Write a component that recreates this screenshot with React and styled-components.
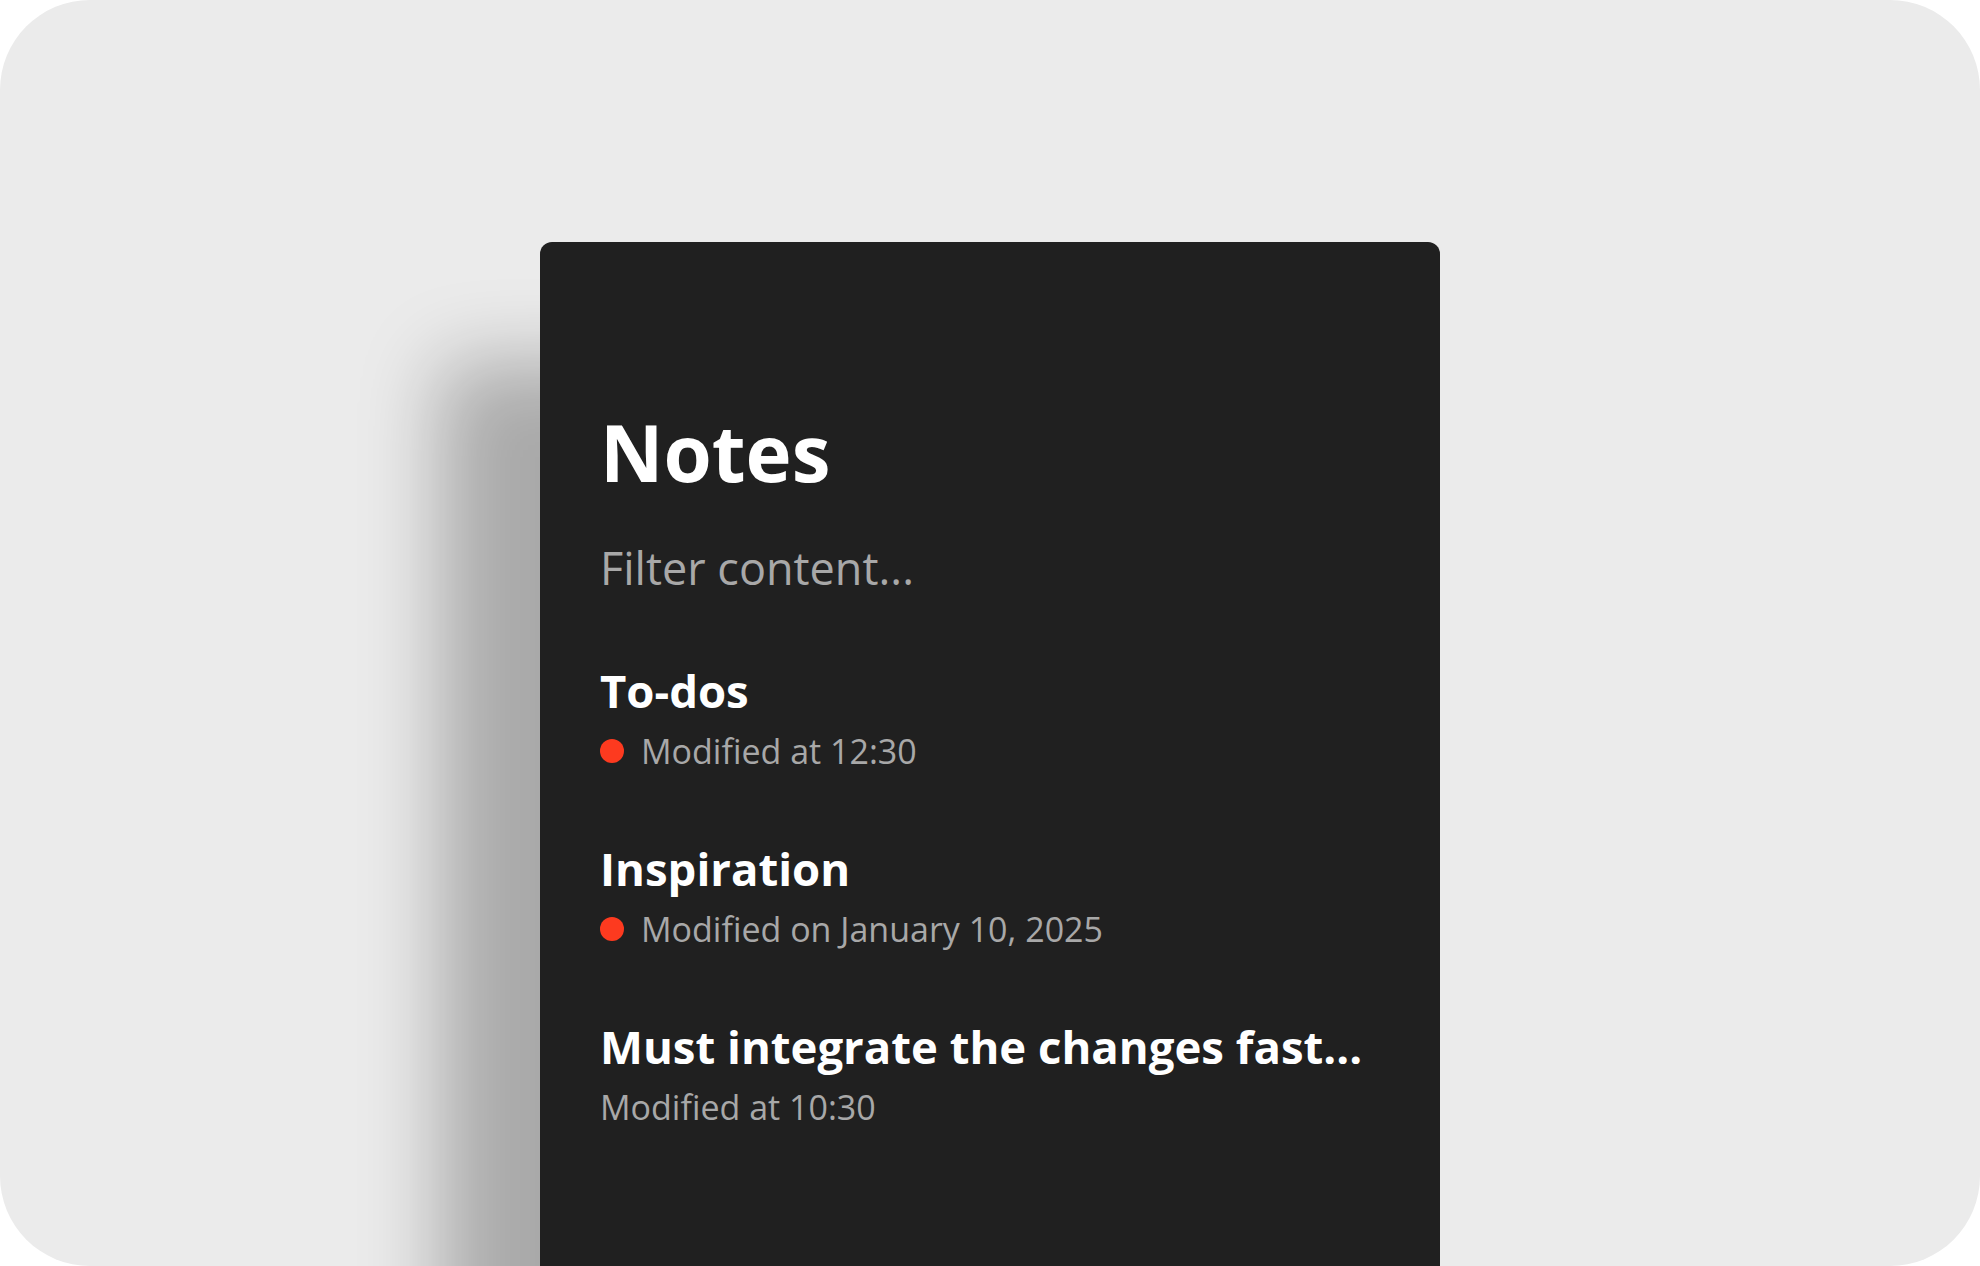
import React from "react";
import styled, { createGlobalStyle } from "styled-components";

const GlobalStyle = createGlobalStyle`
  html, body {
    margin: 0;
    padding: 0;
    background: #ffffff;
  }
  body {
    font-family: "Open Sans", "Noto Sans", "Liberation Sans", sans-serif;
    -webkit-font-smoothing: antialiased;
  }
`;

const Frame = styled.div`
  width: 1980px;
  height: 1266px;
  box-sizing: border-box;
  background: #ebebeb;
  border-radius: 90px;
  overflow: hidden;
  display: flex;
  justify-content: center;
  padding-top: 242px;
`;

const Panel = styled.section`
  width: 900px;
  min-height: 1100px;
  box-sizing: border-box;
  background: #202020;
  border-radius: 12px;
  padding: 160px 60px 0 60px;
  box-shadow: -100px 120px 80px rgba(0, 0, 0, 0.28);
  display: flex;
  flex-direction: column;
`;

const Title = styled.h1`
  margin: 0;
  font-size: 78px;
  line-height: 100px;
  font-weight: 700;
  color: #ffffff;
  letter-spacing: 0;
`;

const Filter = styled.input`
  margin: 36px 0 64px 0;
  padding: 0;
  border: none;
  outline: none;
  background: transparent;
  font-family: inherit;
  font-size: 45px;
  line-height: 60px;
  height: 60px;
  font-weight: 400;
  color: #ffffff;
  width: 100%;
  &::placeholder {
    color: #a8a8a8;
    opacity: 1;
  }
`;

const List = styled.ul`
  list-style: none;
  margin: 0;
  padding: 0;
  display: flex;
  flex-direction: column;
  gap: 67px;
`;

const Item = styled.li`
  display: flex;
  flex-direction: column;
  gap: 11px;
`;

const ItemTitle = styled.div`
  font-size: 45.5px;
  line-height: 56px;
  font-weight: 700;
  color: #ffffff;
  white-space: nowrap;
`;

const Meta = styled.div`
  display: flex;
  align-items: center;
  gap: 17px;
  font-size: 34px;
  line-height: 44px;
  font-weight: 400;
  color: #a8a8a8;
`;

const Dot = styled.span`
  width: 24px;
  height: 24px;
  border-radius: 50%;
  background: #fd3a1f;
  flex: none;
`;

const notes = [
  { title: "To-dos", meta: "Modified at 12:30", unread: true },
  { title: "Inspiration", meta: "Modified on January 10, 2025", unread: true },
  { title: "Must integrate the changes fast...", meta: "Modified at 10:30", unread: false },
];

export default function App() {
  return (
    <>
      <GlobalStyle />
      <Frame>
        <Panel>
          <Title>Notes</Title>
          <Filter placeholder="Filter content..." />
          <List>
            {notes.map((n) => (
              <Item key={n.title}>
                <ItemTitle>{n.title}</ItemTitle>
                <Meta>
                  {n.unread && <Dot />}
                  <span>{n.meta}</span>
                </Meta>
              </Item>
            ))}
          </List>
        </Panel>
      </Frame>
    </>
  );
}
